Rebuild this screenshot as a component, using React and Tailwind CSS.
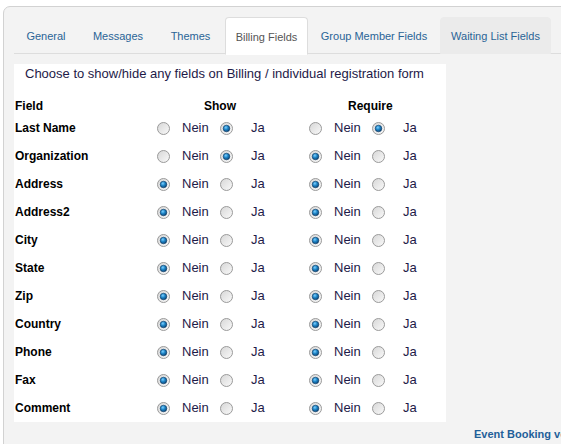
import React from 'react';

// [name, width]
const tabs = [
  ['General', 'w-[64px]'],
  ['Messages', 'w-[76px]'],
  ['Themes', 'w-[65px]'],
  ['Billing Fields', 'w-[83px]'],
  ['Group Member Fields', 'w-[128px]'],
  ['Waiting List Fields', 'w-[111px]'],
];

// [label, showJa, requireJa]
const fields = [
  ['Last Name', true, true],
  ['Organization', true, false],
  ['Address', false, false],
  ['Address2', false, false],
  ['City', false, false],
  ['State', false, false],
  ['Zip', false, false],
  ['Country', false, false],
  ['Phone', false, false],
  ['Fax', false, false],
  ['Comment', false, false],
];

const Radio = ({ checked }) => (
  <svg width="13" height="13" viewBox="0 0 13 13" className="block">
    <defs>
      <linearGradient id="rbg" x1="0" y1="0" x2="1" y2="1">
        <stop offset="0" stopColor="#d6d6d6" />
        <stop offset="1" stopColor="#fafafa" />
      </linearGradient>
      <radialGradient id="rdot" cx="0.4" cy="0.35" r="0.7">
        <stop offset="0" stopColor="#7fd0ff" />
        <stop offset="0.45" stopColor="#1f86c8" />
        <stop offset="1" stopColor="#0a3e6e" />
      </radialGradient>
    </defs>
    <circle cx="6.5" cy="6.5" r="6" fill="url(#rbg)" stroke="#9a9a9a" strokeWidth="1" />
    {checked && <circle cx="6.5" cy="6.5" r="3.3" fill="url(#rdot)" stroke="#0b3a66" strokeWidth="0.6" />}
  </svg>
);

const Pair = ({ ja }) => (
  <>
    <div className="w-[25px] shrink-0 flex"><Radio checked={!ja} /></div>
    <div className="w-[38px] shrink-0">Nein</div>
    <div className="w-[31px] shrink-0 flex"><Radio checked={ja} /></div>
    <div className="w-[58px] shrink-0">Ja</div>
  </>
);

export default function App() {
  return (
    <div className="w-[561px] h-[444px] overflow-hidden bg-white" style={{ fontFamily: '"Liberation Sans", Arial, sans-serif' }}>
      <div className="ml-[3px] mt-[6px] w-[700px] h-[460px] bg-[#f3f3f3] border border-[#d2d2d2] rounded-tl-[7px] pt-[10px] pl-[10px]">
        {/* tabs */}
        <div className="flex border-b border-[#dddddd] h-[37px]">
          {tabs.map(([t, w]) => {
            const active = t === 'Billing Fields';
            const hover = t === 'Waiting List Fields';
            return (
              <div
                key={t}
                className={
                  w +
                  ' shrink-0 mr-[2px] pt-[2px] flex items-center justify-center whitespace-nowrap text-[11px] rounded-t-[4px] border ' +
                  (active
                    ? 'bg-white border-[#dddddd] border-b-white text-[#555555] -mb-px h-[38px]'
                    : hover
                    ? 'bg-[#ebebeb] border-[#ebebeb] text-[#2a6496] h-[37px]'
                    : 'border-transparent text-[#2a6496] h-[37px]')
                }
              >
                {t}
              </div>
            );
          })}
        </div>

        {/* content */}
        <div className="mt-[10px] pt-[2px] w-[432px] bg-white text-[13px] text-[#1e1a48]">
          <div className="h-[16px] leading-[16px] pl-[11px] whitespace-nowrap">
            Choose to show/hide any fields on Billing / individual registration form
          </div>
          <div className="flex mt-[17px] h-[14px] leading-[14px] text-[12px] font-bold text-black pl-px">
            <div className="w-[189px] shrink-0">Field</div>
            <div className="w-[144px] shrink-0">Show</div>
            <div>Require</div>
          </div>
          <div className="mt-px">
            {fields.map(([label, show, req]) => (
              <div key={label} className="flex items-center h-[28px] pl-px">
                <div className="w-[142px] shrink-0 text-[12px] font-bold text-black">{label}</div>
                <Pair ja={show} />
                <Pair ja={req} />
              </div>
            ))}
          </div>
        </div>

        <div className="mt-[4px] ml-[460px] whitespace-nowrap text-[11px] font-bold text-[#1f5f99]">
          Event Booking version 1.6.5
        </div>
      </div>
    </div>
  );
}
